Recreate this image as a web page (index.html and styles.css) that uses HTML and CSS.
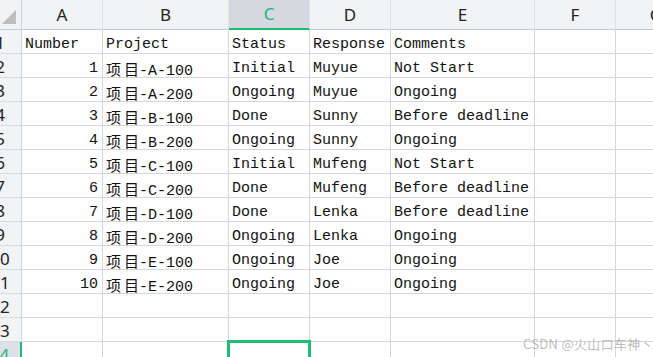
FILE: index.html
```html
<!DOCTYPE html>
<html>
<head>
<meta charset="utf-8">
<link rel="stylesheet" href="styles.css">
</head>
<body>
<div class="sheet">
  <div class="row head">
    <div class="rh corner"><svg width="14" height="14" viewBox="0 0 14 14"><polygon points="14,0 14,14 0,14" fill="#bdbdbd"/></svg></div>
    <div class="ch c-a">A</div><div class="ch c-b">B</div><div class="ch c-c sel">C</div><div class="ch c-d">D</div><div class="ch c-e">E</div><div class="ch c-f">F</div><div class="ch c-g">G</div>
  </div>
  <div class="row"><div class="rh">1</div><div class="c c-a">Number</div><div class="c c-b">Project</div><div class="c c-c">Status</div><div class="c c-d">Response</div><div class="c c-e">Comments</div><div class="c c-f"></div><div class="c c-g"></div></div>
  <div class="row"><div class="rh">2</div><div class="c c-a num">1</div><div class="c c-b"><span class="cjk">项目</span>-A-100</div><div class="c c-c">Initial</div><div class="c c-d">Muyue</div><div class="c c-e">Not Start</div><div class="c c-f"></div><div class="c c-g"></div></div>
  <div class="row"><div class="rh">3</div><div class="c c-a num">2</div><div class="c c-b"><span class="cjk">项目</span>-A-200</div><div class="c c-c">Ongoing</div><div class="c c-d">Muyue</div><div class="c c-e">Ongoing</div><div class="c c-f"></div><div class="c c-g"></div></div>
  <div class="row"><div class="rh">4</div><div class="c c-a num">3</div><div class="c c-b"><span class="cjk">项目</span>-B-100</div><div class="c c-c">Done</div><div class="c c-d">Sunny</div><div class="c c-e">Before deadline</div><div class="c c-f"></div><div class="c c-g"></div></div>
  <div class="row"><div class="rh">5</div><div class="c c-a num">4</div><div class="c c-b"><span class="cjk">项目</span>-B-200</div><div class="c c-c">Ongoing</div><div class="c c-d">Sunny</div><div class="c c-e">Ongoing</div><div class="c c-f"></div><div class="c c-g"></div></div>
  <div class="row"><div class="rh">6</div><div class="c c-a num">5</div><div class="c c-b"><span class="cjk">项目</span>-C-100</div><div class="c c-c">Initial</div><div class="c c-d">Mufeng</div><div class="c c-e">Not Start</div><div class="c c-f"></div><div class="c c-g"></div></div>
  <div class="row"><div class="rh">7</div><div class="c c-a num">6</div><div class="c c-b"><span class="cjk">项目</span>-C-200</div><div class="c c-c">Done</div><div class="c c-d">Mufeng</div><div class="c c-e">Before deadline</div><div class="c c-f"></div><div class="c c-g"></div></div>
  <div class="row"><div class="rh">8</div><div class="c c-a num">7</div><div class="c c-b"><span class="cjk">项目</span>-D-100</div><div class="c c-c">Done</div><div class="c c-d">Lenka</div><div class="c c-e">Before deadline</div><div class="c c-f"></div><div class="c c-g"></div></div>
  <div class="row"><div class="rh">9</div><div class="c c-a num">8</div><div class="c c-b"><span class="cjk">项目</span>-D-200</div><div class="c c-c">Ongoing</div><div class="c c-d">Lenka</div><div class="c c-e">Ongoing</div><div class="c c-f"></div><div class="c c-g"></div></div>
  <div class="row"><div class="rh">10</div><div class="c c-a num">9</div><div class="c c-b"><span class="cjk">项目</span>-E-100</div><div class="c c-c">Ongoing</div><div class="c c-d">Joe</div><div class="c c-e">Ongoing</div><div class="c c-f"></div><div class="c c-g"></div></div>
  <div class="row"><div class="rh">11</div><div class="c c-a num">10</div><div class="c c-b"><span class="cjk">项目</span>-E-200</div><div class="c c-c">Ongoing</div><div class="c c-d">Joe</div><div class="c c-e">Ongoing</div><div class="c c-f"></div><div class="c c-g"></div></div>
  <div class="row"><div class="rh">12</div><div class="c c-a"></div><div class="c c-b"></div><div class="c c-c"></div><div class="c c-d"></div><div class="c c-e"></div><div class="c c-f"></div><div class="c c-g"></div></div>
  <div class="row"><div class="rh">13</div><div class="c c-a"></div><div class="c c-b"></div><div class="c c-c"></div><div class="c c-d"></div><div class="c c-e"></div><div class="c c-f"></div><div class="c c-g"></div></div>
  <div class="row"><div class="rh rsel">14</div><div class="c c-a"></div><div class="c c-b"></div><div class="c c-c active"></div><div class="c c-d"></div><div class="c c-e"></div><div class="c c-f"></div><div class="c c-g"></div></div>
</div>
<div class="watermark">CSDN @火山口车神丶</div>
</body>
</html>
```

FILE: styles.css
```css
html, body {
  margin: 0;
  padding: 0;
  background: #ffffff;
  overflow: hidden;
  width: 653px;
  height: 357px;
}

.sheet {
  margin-left: -21px;
  width: 760px;
}

.row {
  display: flex;
  height: 24px;
}

.row.head {
  height: 30px;
}

.rh, .ch, .c {
  box-sizing: border-box;
  flex: none;
  height: 100%;
}

.rh {
  width: 43px;
  background: #f2f3f5;
  border-right: 1px solid #cfd3db;
  border-bottom: 1px solid #d8dbe1;
  padding-top: 1px;
  font-family: "Noto Sans", sans-serif;
  font-size: 17px;
  line-height: 23px;
  color: #222222;
  text-align: center;
}

.rh.corner {
  display: flex;
  justify-content: flex-end;
  align-items: flex-end;
  padding: 0 5px 5px 0;
  border-bottom: 1px solid #c5cad4;
}

.rh.rsel {
  background: #dde0e6;
  color: #1db673;
  border-right: 2px solid #1fb874;
}

.ch {
  background: #f2f3f5;
  border-right: 1px solid #dfe2e7;
  border-bottom: 1px solid #c5cad4;
  font-family: "Noto Sans", sans-serif;
  font-size: 17px;
  line-height: 29px;
  color: #222222;
  text-align: center;
}

.ch.sel {
  background: #d5d8de;
  color: #1db673;
  border-bottom: 2px solid #1fb874;
  line-height: 28px;
}

.c {
  position: relative;
  border-right: 1px solid #d3d7de;
  border-bottom: 1px solid #d3d7de;
  padding: 5px 3px 0 3px;
  font-family: "Liberation Mono", monospace;
  font-size: 15px;
  line-height: 20px;
  color: #111111;
  white-space: nowrap;
  overflow: visible;
}

.c.num {
  text-align: right;
  padding-right: 4px;
}

.cjk {
  font-family: "Noto Sans CJK SC", sans-serif;
  font-size: 15px;
  letter-spacing: 3px;
  margin-right: -3px;
}

.c-a { width: 81px; }
.c-b { width: 126px; }
.c-c { width: 81px; }
.c-d { width: 81px; }
.c-e { width: 144px; }
.c-f { width: 81px; }
.c-g { width: 81px; }

.c.active::after {
  content: "";
  position: absolute;
  top: -2px;
  left: -2px;
  right: -2px;
  bottom: -4px;
  border: 3px solid #1fbd78;
}

.watermark {
  position: absolute;
  left: 523px;
  top: 335px;
  font-family: "Noto Sans CJK SC", sans-serif;
  font-size: 13px;
  line-height: 18px;
  color: rgba(150, 150, 150, 0.65);
  letter-spacing: 0.3px;
  white-space: nowrap;
}
```
